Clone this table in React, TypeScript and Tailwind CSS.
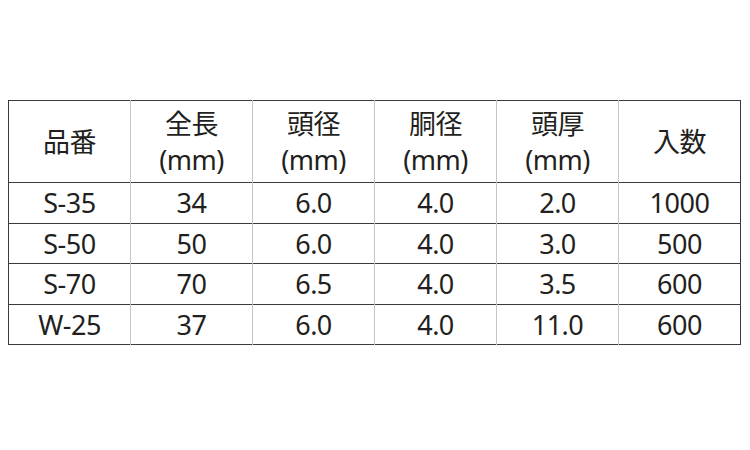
import React from 'react'

const headers: string[][] = [
    ['品番'],
    ['全長', '(mm)'],
    ['頭径', '(mm)'],
    ['胴径', '(mm)'],
    ['頭厚', '(mm)'],
    ['入数'],
]

const rows: string[][] = [
    ['S-35', '34', '6.0', '4.0', '2.0', '1000'],
    ['S-50', '50', '6.0', '4.0', '3.0', '500'],
    ['S-70', '70', '6.5', '4.0', '3.5', '600'],
    ['W-25', '37', '6.0', '4.0', '11.0', '600'],
]

export default function App() {
    return (
        <div className="w-[750px] h-[450px] bg-white pt-[100px] pl-[8px]">
            <table
                className="border-collapse border border-[#3a3a3a] text-[#231f20] text-[27px] tracking-[-0.5px]"
                style={{ fontFamily: '"Noto Sans", "Noto Sans CJK JP", sans-serif' }}
            >
                <thead>
                    <tr className="h-[82px] border-b border-[#3a3a3a]">
                        {headers.map((h, i) => (
                            <th
                                key={i}
                                className="w-[122px] p-0 font-normal leading-[36px] border-r border-[#c4c4c4] last:border-r-[#3a3a3a] align-middle"
                            >
                                {h.map((line, j) => (
                                    <div key={j}>{line}</div>
                                ))}
                            </th>
                        ))}
                    </tr>
                </thead>
                <tbody>
                    {rows.map((r, i) => (
                        <tr key={i} className="h-[40.5px] border-b border-[#3a3a3a]">
                            {r.map((c, j) => (
                                <td
                                    key={j}
                                    className="p-0 text-center leading-none border-r border-[#c4c4c4] last:border-r-[#3a3a3a]"
                                >
                                    {c}
                                </td>
                            ))}
                        </tr>
                    ))}
                </tbody>
            </table>
        </div>
    )
}
